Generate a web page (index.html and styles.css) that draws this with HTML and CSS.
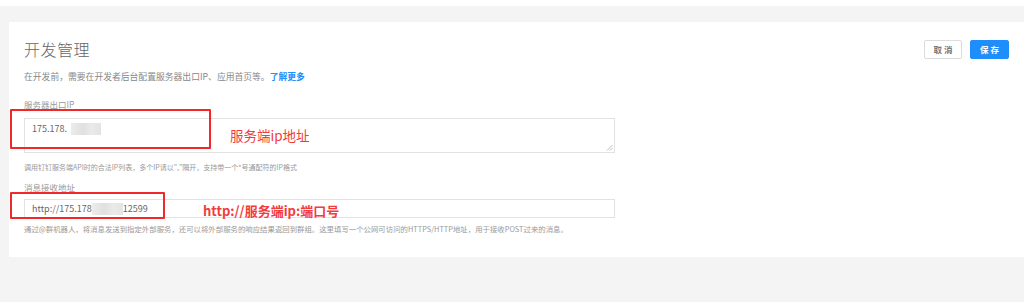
FILE: index.html
```html
<!DOCTYPE html>
<html lang="zh-CN">
<head>
<meta charset="utf-8">
<link rel="stylesheet" href="styles.css">
</head>
<body>
<div class="topbar"></div>
<div class="page">
  <div class="card">
    <div class="header">
      <h1 class="title">开发管理</h1>
      <div class="actions">
        <button class="btn btn-default">取 消</button>
        <button class="btn btn-primary">保 存</button>
      </div>
    </div>
    <p class="desc">在开发前，需要在开发者后台配置服务器出口IP、应用首页等。<a class="link">了解更多</a></p>

    <div class="label label-first">服务器出口IP</div>
    <div class="textarea">
      <span class="value">175.178.</span><span class="mask mask-1"></span>
      <svg class="grip" width="7" height="7" viewBox="0 0 7 7"><path d="M6.5 1 L1 6.5 M6.5 4 L4 6.5" stroke="#bbb" stroke-width="1" fill="none"/></svg>
    </div>
    <p class="help help-first">调用钉钉服务端API时的合法IP列表，多个IP请以","隔开，支持带一个*号通配符的IP格式</p>

    <div class="label">消息接收地址</div>
    <div class="input">
      <span class="value">http://175.178</span><span class="mask mask-2"></span><span class="value">12599</span>
    </div>
    <p class="help help-last">通过@群机器人，将消息发送到指定外部服务，还可以将外部服务的响应结果返回到群组。这里填写一个公网可访问的HTTPS/HTTP地址，用于接收POST过来的消息。</p>

    <div class="mark mark-1"></div>
    <div class="note note-1">服务端ip地址</div>
    <div class="mark mark-2"></div>
    <div class="note note-2">http://服务端ip:端口号</div>
  </div>
</div>
</body>
</html>
```

FILE: styles.css
```css
html, body {
  margin: 0;
  padding: 0;
}
body {
  background: #f4f4f4;
  font-family: "Noto Sans CJK SC", "Noto Sans", sans-serif;
  width: 1024px;
  height: 302px;
  overflow: hidden;
}
.topbar {
  height: 6px;
  background: #ffffff;
}
.page {
  padding: 16px 0 0 9px;
}
.card {
  position: relative;
  background: #ffffff;
  padding: 17px 15px 23px 15px;
  height: 195px;
}
.header {
  display: flex;
  align-items: center;
  justify-content: space-between;
  height: 20px;
}
.title {
  margin: 0;
  font-size: 16px;
  font-weight: 300;
  color: #666;
  line-height: 20px;
  letter-spacing: 0.5px;
}
.actions {
  display: flex;
  gap: 8px;
}
.btn {
  height: 19px;
  width: 39px;
  border-radius: 2px;
  font-family: "Noto Sans CJK SC", sans-serif;
  font-size: 8.5px;
  font-weight: 700;
  padding: 0;
  line-height: 17px;
  cursor: pointer;
}
.btn-default {
  background: #fff;
  border: 1px solid #dcdcdc;
  color: #777;
  width: 38px;
}
.btn-primary {
  background: #1e8ffa;
  border: 1px solid #1e8ffa;
  color: #fff;
}
.desc {
  margin: 12px 0 0 0;
  font-size: 8.8px;
  line-height: 12px;
  color: #888;
}
.link {
  color: #1e8ffa;
  font-weight: 700;
}
.label {
  margin-top: 8px;
  font-size: 8.5px;
  line-height: 12px;
  color: #999;
}
.label-first {
  margin-top: 15px;
}
.textarea {
  position: relative;
  box-sizing: border-box;
  margin-top: 8px;
  width: 591px;
  height: 35px;
  border: 1px solid #e2e2e2;
  padding: 4px 7px;
  display: flex;
  align-items: flex-start;
}
.grip {
  position: absolute;
  right: 1px;
  bottom: 1px;
}
.input {
  box-sizing: border-box;
  margin-top: 6px;
  width: 591px;
  height: 19px;
  border: 1px solid #e2e2e2;
  padding: 0 7px;
  display: flex;
  align-items: center;
}
.value {
  font-size: 9px;
  line-height: 12px;
  color: #666;
}
.mask {
  display: inline-block;
  height: 12px;
  background: linear-gradient(90deg, #ececec, #e0e0e0 40%, #eaeaea 70%, #e3e3e3);
  filter: blur(0.6px);
}
.mask-1 {
  width: 30px;
  margin-left: 4px;
}
.mask-2 {
  width: 31px;
}
.help {
  margin: 8px 0 0 0;
  font-size: 7.5px;
  line-height: 12px;
  color: #999;
}
.help-first {
  font-size: 7px;
}
.help-last {
  margin-top: 5px;
  font-size: 7.4px;
}
.mark {
  position: absolute;
  border: 2px solid #f0282a;
  box-sizing: border-box;
  border-radius: 1px;
}
.mark-1 {
  left: 1px;
  top: 87px;
  width: 201px;
  height: 40px;
}
.mark-2 {
  left: 1px;
  top: 170px;
  width: 155px;
  height: 27px;
}
.note {
  position: absolute;
  color: #f23c3c;
  white-space: nowrap;
}
.note-1 {
  left: 221px;
  top: 104px;
  font-size: 13.5px;
  line-height: 18px;
}
.note-2 {
  left: 194px;
  top: 180px;
  font-size: 13px;
  line-height: 18px;
  font-weight: 700;
}
```
